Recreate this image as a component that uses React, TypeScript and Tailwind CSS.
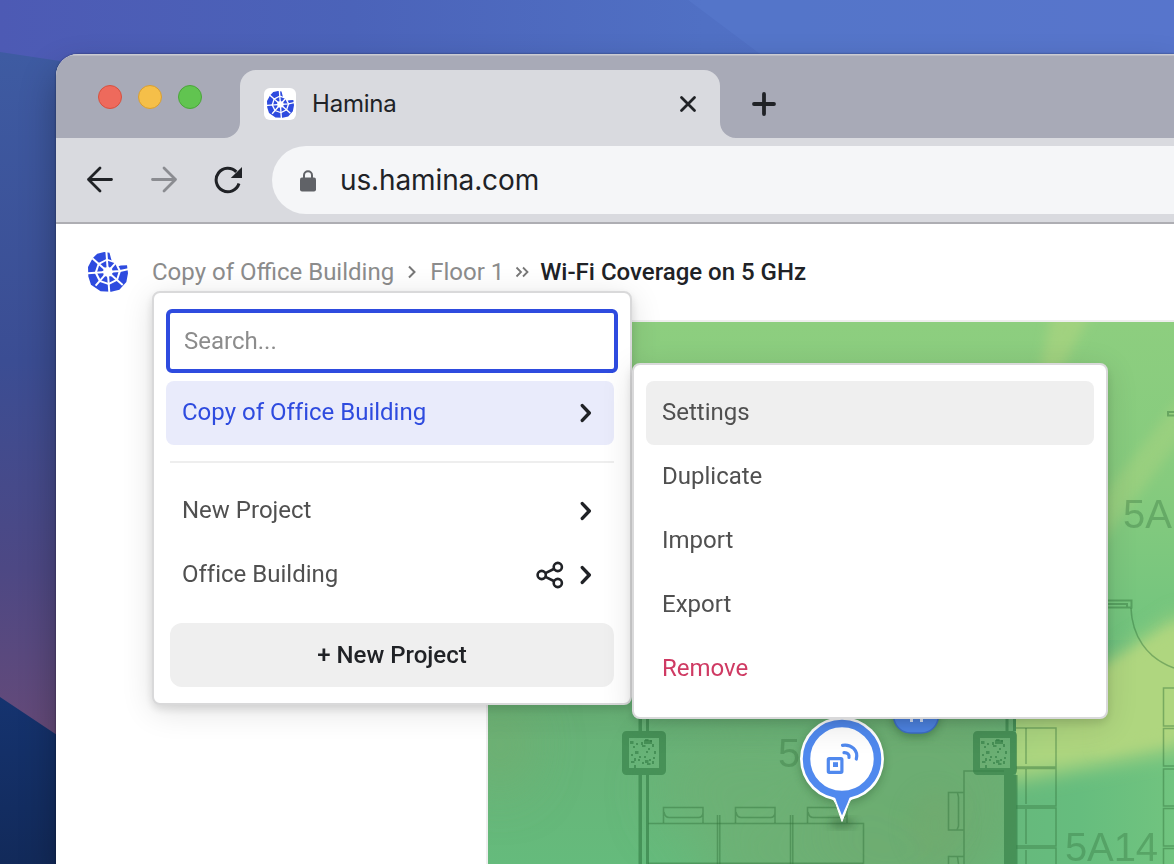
import type { ReactNode } from "react";

function HaminaLogo({ className }: { className?: string }) {
  return (
    <svg viewBox="3 3 121 121" className={className} aria-hidden="true">
      <path
        fill="#2e4bdf"
        d="M31 8 L52 3 L68 5 L73 24 L80 42 L88 48 L102 44 L121 43 L124 67 L119 94 L98 117 L73 123 L41 122 L12 102 L4 77 L3 48 L17 22 Z"
      />
      <path fill="#fff" d="M60.200 23.100 L89.200 32.900 L102.900 60.200 L93.100 89.200 L65.800 102.900 L36.800 93.100 L23.100 65.800 L32.900 36.800 Z" />
      <path fill="#2e4bdf" d="M60.700 29 L84.600 37.200 L96 60.700 L88.800 84.600 L65.300 97 L41.400 88.800 L30 65.300 L37.200 41.400 Z" />
      <path fill="none" stroke="#fff" strokeWidth="6" d="M58.500 0 L67.500 126 M0 67.500 L100 60.500 L128 54 M16 22 L108 103 M92 30 L26 105" />
      <path fill="#fff" d="M63 46 L68 50 L76 50 L76 58 L81 63 L76 68 L76 76 L68 76 L63 81 L58 76 L50 76 L50 68 L45 63 L50 58 L50 50 L58 50 Z" />
    </svg>
  );
}

function Chevron() {
  return (
    <svg viewBox="0 0 12 20" className="h-5 w-3" fill="none" stroke="#202226" strokeWidth="3.4" strokeLinecap="round" strokeLinejoin="round">
      <path d="M2.300 2.600 L9.300 10 L2.300 17.400" />
    </svg>
  );
}

function ShareIcon() {
  return (
    <svg viewBox="0 0 28 28" className="h-7 w-7" fill="none" stroke="#202226" strokeWidth="2.600">
      <path d="M9 12.400 L17.800 8 M9 15.600 L17.800 20" />
      <circle cx="5.700" cy="14" r="4.100" />
      <circle cx="21.800" cy="6" r="4.100" />
      <circle cx="21.800" cy="22" r="4.100" />
    </svg>
  );
}

function Wallpaper() {
  return (
    <svg viewBox="0 0 1174 864" className="absolute inset-0 h-full w-full" preserveAspectRatio="none">
      <defs>
        <linearGradient id="sky" x1="0" y1="0" x2="1" y2="0">
          <stop offset="0" stopColor="#4d5ab4" />
          <stop offset="0.3" stopColor="#4b63b9" />
          <stop offset="0.6" stopColor="#5070c4" />
          <stop offset="1" stopColor="#5571c8" />
        </linearGradient>
        <linearGradient id="side" x1="0" y1="0" x2="0" y2="1">
          <stop offset="0" stopColor="#3e5ba2" />
          <stop offset="0.45" stopColor="#3b4d93" />
          <stop offset="0.75" stopColor="#4d4884" />
          <stop offset="1" stopColor="#664a78" />
        </linearGradient>
        <linearGradient id="dusk" x1="0" y1="0" x2="0" y2="1">
          <stop offset="0" stopColor="#15336f" />
          <stop offset="1" stopColor="#122a5a" />
        </linearGradient>
      </defs>
      <rect width="1174" height="864" fill="url(#sky)" />
      <path d="M688 0 L760 54 H1174 V0 Z" fill="#6182d6" opacity="0.25" />
      <path d="M0 52 L60 61 V740 H0 Z" fill="url(#side)" />
      <path d="M0 697 L60 737 V864 H0 Z" fill="url(#dusk)" />
    </svg>
  );
}

const speckles = [
  [2, 4], [5, 9], [8, 6], [13, 5], [17, 2], [22, 3], [24, 7], [20, 11], [14, 8], [26, 14],
  [18, 14], [3, 17], [7, 14], [16, 19], [21, 22], [6, 21], [3, 24], [10, 22], [24, 24], [14, 25],
  [19, 26], [6, 28], [25, 20], [11, 19], [17, 23],
];

function Column({ x, y }: { x: number; y: number }) {
  return (
    <g transform={`translate(${x} ${y})`}>
      <rect x="3.500" y="3.500" width="37" height="37" rx="1" fill="none" stroke="#357f47" strokeOpacity="0.66" strokeWidth="7" strokeLinejoin="round" />
      <g fill="#357f47" fillOpacity="0.66">
        {speckles.map(([sx, sy], i) => (
          <rect key={i} x={sx + 6} y={sy + 6} width={i % 4 === 0 ? 3.5 : 2} height={i % 3 === 0 ? 3 : 2} />
        ))}
        <rect x="22" y="9" width="8" height="4" />
      </g>
    </g>
  );
}

function FloorMap() {
  return (
    <svg viewBox="488 322 686 542" className="block h-[542px] w-[686px]">
      <defs>
        <linearGradient id="base" x1="0" y1="0" x2="0" y2="1">
          <stop offset="0" stopColor="#8dce7f" />
          <stop offset="0.3" stopColor="#86cb7e" />
          <stop offset="0.58" stopColor="#72c47e" />
          <stop offset="0.75" stopColor="#68b277" />
          <stop offset="1" stopColor="#65bb7c" />
        </linearGradient>
        <linearGradient id="warm" x1="0" y1="0" x2="1" y2="0.5">
          <stop offset="0" stopColor="#9dcf7f" />
          <stop offset="0.6" stopColor="#afd67f" />
          <stop offset="1" stopColor="#afd57f" />
        </linearGradient>
        <linearGradient id="east" x1="0" y1="0" x2="1" y2="0">
          <stop offset="0" stopColor="#66b97c" />
          <stop offset="0.4" stopColor="#66bd7e" />
          <stop offset="1" stopColor="#71c47f" />
        </linearGradient>
        <filter id="soft5" x="-30%" y="-30%" width="160%" height="160%"><feGaussianBlur stdDeviation="6" /></filter>
        <filter id="soft10" x="-50%" y="-50%" width="200%" height="200%"><feGaussianBlur stdDeviation="10" /></filter>
        <filter id="soft30" x="-50%" y="-50%" width="200%" height="200%"><feGaussianBlur stdDeviation="26" /></filter>
        <filter id="pinShadow" x="-50%" y="-50%" width="200%" height="200%"><feGaussianBlur stdDeviation="4" /></filter>
        <clipPath id="eastWing"><rect x="1016" y="322" width="158" height="542" /></clipPath>
      </defs>
      <rect x="488" y="322" width="686" height="542" fill="url(#base)" />
      <path d="M1052 312 H1092 L1060 372 L1034 400 Z" fill="#b2d580" opacity="0.55" filter="url(#soft5)" />
      <path d="M1184 392 L1100 500 V545 L1184 435 Z" fill="#b2d580" opacity="0.4" filter="url(#soft5)" />
      <g filter="url(#soft30)">
        <ellipse cx="750" cy="790" rx="90" ry="60" fill="#70ae73" opacity="0.6" />
        <ellipse cx="920" cy="805" rx="110" ry="110" fill="#6dac71" opacity="0.9" />
        <ellipse cx="500" cy="745" rx="28" ry="45" fill="#73ac6e" opacity="0.7" />
        <ellipse cx="810" cy="870" rx="110" ry="40" fill="#70ad72" opacity="0.7" />
      </g>
      <ellipse cx="935" cy="825" rx="26" ry="34" fill="#73a96e" opacity="0.5" filter="url(#soft10)" />
      <g clipPath="url(#eastWing)">
        <rect x="1016" y="640" width="158" height="224" fill="url(#east)" />
        <path d="M1090 673 L1184 612 V748 L1110 763 L1000 783 V690 Z" fill="url(#warm)" filter="url(#soft10)" />
        <path d="M1096 678 L1184 620 V736 L1096 752 Z" fill="#afd67f" filter="url(#soft5)" />
      </g>

      <g fill="none" stroke="#2e6d38" strokeOpacity="0.42" strokeWidth="1.500">
        <path d="M1016 728 H1056 V767 H1016 M1016 768.500 H1056 V806 H1016 M1016 808 H1056 V846 H1016 M1016 848 H1056 V870" />
        <path d="M1026 728 V764 M1026 769 V804 M1026 809 V844 M1026 850 V870" />
        <path d="M1174 688 H1163.500 V726 H1174 M1174 728.500 H1163.500 V766 H1174 M1174 769 H1163.500 V806 H1174 M1174 808.500 H1163.500 V846 H1174 M1174 848.500 H1163.500 V870" />
        <path d="M1108 600.500 H1131.500 V607.500 H1108 M1108 604 H1127 V607" strokeWidth="2" />
        <path d="M1131 608 C1132 635 1146 658 1174 668" />
        <path d="M1174 412 H1168 V415.500 H1174" strokeWidth="2" />
        <path d="M648 823.500 H863.500 V864" />
        <path d="M717.500 815 V864 M719.800 815 V864 M790.500 815 V864 M792.800 815 V864" />
        <path d="M648 863.300 H863" />
        <path d="M663.500 823 V807.500 H703 V823 M664 812 Q665 817.500 669 817.500 H699 Q703 817 703 812" />
        <path d="M735.500 823 V807.500 H775 V823 M736 812 Q737 817.500 741 817.500 H771 Q775 817 775 812" />
        <path d="M807.500 823 V807.500 H847 V823 M808 812 Q809 817.500 813 817.500 H843 Q847 817 847 812" />
        <path d="M1004 771 H964 V864 M964 792.500 H948.500 V830 H964 M957.500 793 L958.500 797 V826 L957 830 M964 856.500 H948.500 V864 M957.500 857 L958.500 864" />
      </g>
      <g fill="#357f47" fillOpacity="0.66">
        <rect x="638.500" y="700" width="3.500" height="31" />
        <rect x="646" y="700" width="3" height="31" />
        <rect x="638.500" y="775" width="3.500" height="89" />
        <rect x="646" y="775" width="3" height="89" />
        <rect x="1005.500" y="700" width="3" height="31" />
        <rect x="1013" y="700" width="3" height="31" />
        <rect x="1004" y="775" width="13.500" height="89" />
      </g>
      <Column x={622} y={731} />
      <Column x={973} y={731} />
      <g fill="#2e6d38" fillOpacity="0.34" className="font-['Liberation_Sans',sans-serif] text-[40px]">
        <text x="1123" y="528">5A</text>
        <text x="1065" y="861" textLength="93">5A14</text>
        <text x="778" y="767">5A</text>
      </g>

      <rect x="893" y="697" width="46" height="40" rx="18" fill="#235029" opacity="0.4" filter="url(#pinShadow)" />
      <rect x="893.700" y="690" width="44.600" height="43" rx="17" fill="#4d83e2" stroke="#3d6dc6" strokeWidth="1.500" />
      <path d="M911.500 710 V722 M921.500 710 V722" stroke="#d5e2fa" strokeWidth="3" />

      <ellipse cx="842" cy="823" rx="13" ry="4" fill="#204d28" opacity="0.5" filter="url(#pinShadow)" />
      <circle cx="842" cy="762" r="42" fill="#204d28" opacity="0.35" filter="url(#pinShadow)" />
      <path d="M830 797 Q834 799 836 804 L842 821.500 L848.500 804 Q850 799 854 797 Z" fill="#fff" stroke="#fff" strokeWidth="1" />
      <circle cx="842" cy="759" r="42" fill="#fff" />
      <path d="M833 794 Q836 799 837 803 L842 815.500 L847.500 803 Q849 799 851 794 Z" fill="#5089ee" />
      <circle cx="842" cy="759" r="35.500" fill="#fff" stroke="#5089ee" strokeWidth="7.500" />
      <g fill="none" stroke="#5089ee" strokeWidth="3.200" strokeLinecap="round">
        <rect x="828.300" y="758.700" width="13.600" height="13.600" rx="1" />
        <path d="M842.500 745.300 C851.500 743.900 858.500 750.500 856.300 759" />
        <path d="M844 752.700 C847.500 752.500 849.600 754.600 849 757.500" />
      </g>
      <rect x="833" y="762.200" width="5" height="4.800" fill="#5089ee" />
    </svg>
  );
}

function MenuRow({ label, tone, children }: { label: string; tone: string; children?: ReactNode }) {
  return (
    <div className={`flex h-16 w-full items-center justify-between rounded-lg pl-4 pr-[22px] text-[24px] [font-variant-ligatures:none] ${tone}`}>
      <span className="-mt-0.5">{label}</span>
      <span className="flex items-center gap-4">{children}</span>
    </div>
  );
}

function ProjectMenu() {
  return (
    <div className="absolute left-[96px] top-[67px] h-[414px] w-[480px] rounded-lg border-2 border-[#d9d9da] bg-white pl-3 pt-4 shadow-[0_6px_32px_rgba(0,0,0,0.12),0_4px_10px_rgba(0,0,0,0.12)]">
      <input
        placeholder="Search..."
        className="block h-16 w-[452px] rounded-md border-4 border-[#2e4bdf] bg-white px-3.5 text-[24px] text-[#555] outline-none placeholder:text-[#8c8c8c]"
      />
      <div className="mt-2 w-[448px]">
        <MenuRow label="Copy of Office Building" tone="bg-[#e9ebfb] text-[#2e4bdf]"><Chevron /></MenuRow>
        <div className="ml-1 mt-4 h-0.5 bg-[#eee]" />
        <div className="mt-4">
          <MenuRow label="New Project" tone="text-[#505050]"><Chevron /></MenuRow>
          <MenuRow label="Office Building" tone="text-[#505050]"><ShareIcon /><Chevron /></MenuRow>
        </div>
        <button className="ml-1 mt-4 flex h-16 w-[444px] items-center justify-center rounded-xl bg-[#efefef] text-[24px] font-medium text-[#202226]">
          + New Project
        </button>
      </div>
    </div>
  );
}

function ActionMenu() {
  return (
    <div className="absolute left-[576px] top-[139px] h-[356px] w-[476px] rounded-lg border-2 border-[#d9d9da] bg-white px-3 pt-4 shadow-[0_6px_32px_rgba(0,0,0,0.12),0_4px_10px_rgba(0,0,0,0.12)]">
      <MenuRow label="Settings" tone="bg-[#efefef] text-[#505050]" />
      <MenuRow label="Duplicate" tone="text-[#505050]" />
      <MenuRow label="Import" tone="text-[#505050]" />
      <MenuRow label="Export" tone="text-[#505050]" />
      <MenuRow label="Remove" tone="text-[#cf3a63]" />
    </div>
  );
}

function TabStrip() {
  return (
    <div className="flex h-[84px] items-end bg-[#a8aab7] shadow-[inset_0_1.5px_0_#cbccd3]">
      <div className="flex w-[184px] shrink-0 gap-4 self-start pl-[42px] pt-[31px]">
        <span className="h-6 w-6 rounded-full border border-[#d6513f] bg-[#ee6a5c]" />
        <span className="h-6 w-6 rounded-full border border-[#d89e32] bg-[#f5bf49]" />
        <span className="h-6 w-6 rounded-full border border-[#4ba53a] bg-[#61c450]" />
      </div>
      <div className="relative flex h-[68px] w-[480px] shrink-0 items-center rounded-t-2xl bg-[#d9dadf] pl-6 pr-[23px]">
        <svg viewBox="0 0 16 16" className="absolute -left-4 bottom-0 h-4 w-4"><path d="M16 0 V16 H0 A16 16 0 0 0 16 0" fill="#d9dadf" /></svg>
        <svg viewBox="0 0 16 16" className="absolute -right-4 bottom-0 h-4 w-4"><path d="M0 0 V16 H16 A16 16 0 0 1 0 0" fill="#d9dadf" /></svg>
        <span className="flex h-8 w-8 items-center justify-center rounded-md bg-white"><HaminaLogo className="h-[27px] w-[27px]" /></span>
        <span className="ml-4 font-['Inter',sans-serif] text-[24px] tracking-[-0.2px] text-[#202226]">Hamina</span>
        <svg viewBox="0 0 18 18" className="ml-auto h-[18px] w-[18px]" stroke="#202226" strokeWidth="2.800" strokeLinecap="round"><path d="M2.500 2.500 L15.500 15.500 M15.500 2.500 L2.500 15.500" /></svg>
      </div>
      <svg viewBox="0 0 26 26" className="mb-[21px] ml-[31px] h-[26px] w-[26px]" stroke="#202226" strokeWidth="3.800" strokeLinecap="round"><path d="M13 3 V23 M3 13 H23" /></svg>
    </div>
  );
}

function Toolbar() {
  return (
    <div className="flex h-[86px] items-center border-b-2 border-[#aeaeb3] bg-[#d9dadf]">
      <svg viewBox="0 0 28 28" className="ml-[30px] h-7 w-7" fill="none" stroke="#202226" strokeWidth="2.800" strokeLinecap="round" strokeLinejoin="round"><path d="M25.500 13.500 H2.500 M14 2 L2.500 13.500 L14 25" /></svg>
      <svg viewBox="0 0 28 28" className="ml-9 h-7 w-7" fill="none" stroke="#8b8c91" strokeWidth="2.800" strokeLinecap="round" strokeLinejoin="round"><path d="M2.500 13.500 H25.500 M14 2 L25.500 13.500 L14 25" /></svg>
      <svg viewBox="0 0 28 28" className="ml-9 h-7 w-7">
        <path d="M25 17.500 A11.700 11.700 0 1 1 22.300 5.900" fill="none" stroke="#202226" strokeWidth="3" />
        <path d="M28 1 V12 H16.800 Z" fill="#202226" />
      </svg>
      <div className="ml-[30px] flex h-[68px] flex-1 items-center rounded-l-full bg-[#f5f6f8] pl-7">
        <svg viewBox="0 0 16 22" className="mt-px h-[22px] w-4"><path d="M4 9 V5.300 A4 4 0 0 1 12 5.300 V9" fill="none" stroke="#606267" strokeWidth="2" /><rect y="7.500" width="16" height="14" rx="2" fill="#606267" /></svg>
        <span className="ml-6 font-['Inter',sans-serif] text-[28px] tracking-[-0.12px] text-[#202226]">us.hamina.com</span>
      </div>
    </div>
  );
}

export default function App() {
  return (
    <div className="relative h-[864px] w-[1174px] overflow-hidden bg-[#4b63b9] font-['Roboto',sans-serif]">
      <Wallpaper />
      <div className="relative pl-14 pt-[54px]">
        <div className="rounded-tl-[22px] shadow-[0_0_2px_rgba(0,0,0,0.5),0_18px_36px_rgba(0,0,0,0.3)]">
          <div className="h-[810px] overflow-hidden rounded-tl-[22px] bg-white">
            <TabStrip />
            <Toolbar />
            <main className="relative">
              <header className="flex h-24 items-start pl-8 pt-7">
                <HaminaLogo className="h-10 w-10" />
                <nav className="ml-6 mt-1 flex items-center whitespace-nowrap text-[24px] leading-[32px] text-[#8c8c8c]">
                  <span>Copy of Office Building</span>
                  <svg viewBox="0 0 10 14" className="ml-[13px] h-3.5 w-2.5" fill="none" stroke="#777" strokeWidth="2"><path d="M2 1.500 L7.500 7 L2 12.500" /></svg>
                  <span className="ml-[13px]">Floor 1</span>
                  <svg viewBox="0 0 14 14" className="ml-[11px] h-3.5 w-3.5" fill="none" stroke="#777" strokeWidth="1.800"><path d="M1.500 2.500 L6 7 L1.500 11.500 M8 2.500 L12.500 7 L8 11.500" /></svg>
                  <span className="ml-[11px] font-medium text-[#202226]">Wi-Fi Coverage on 5 GHz</span>
                </nav>
              </header>
              <div className="ml-[430px] h-[544px] border-l-2 border-t-2 border-[#eee]">
                <FloorMap />
              </div>
              <ProjectMenu />
              <ActionMenu />
            </main>
          </div>
        </div>
      </div>
    </div>
  );
}
